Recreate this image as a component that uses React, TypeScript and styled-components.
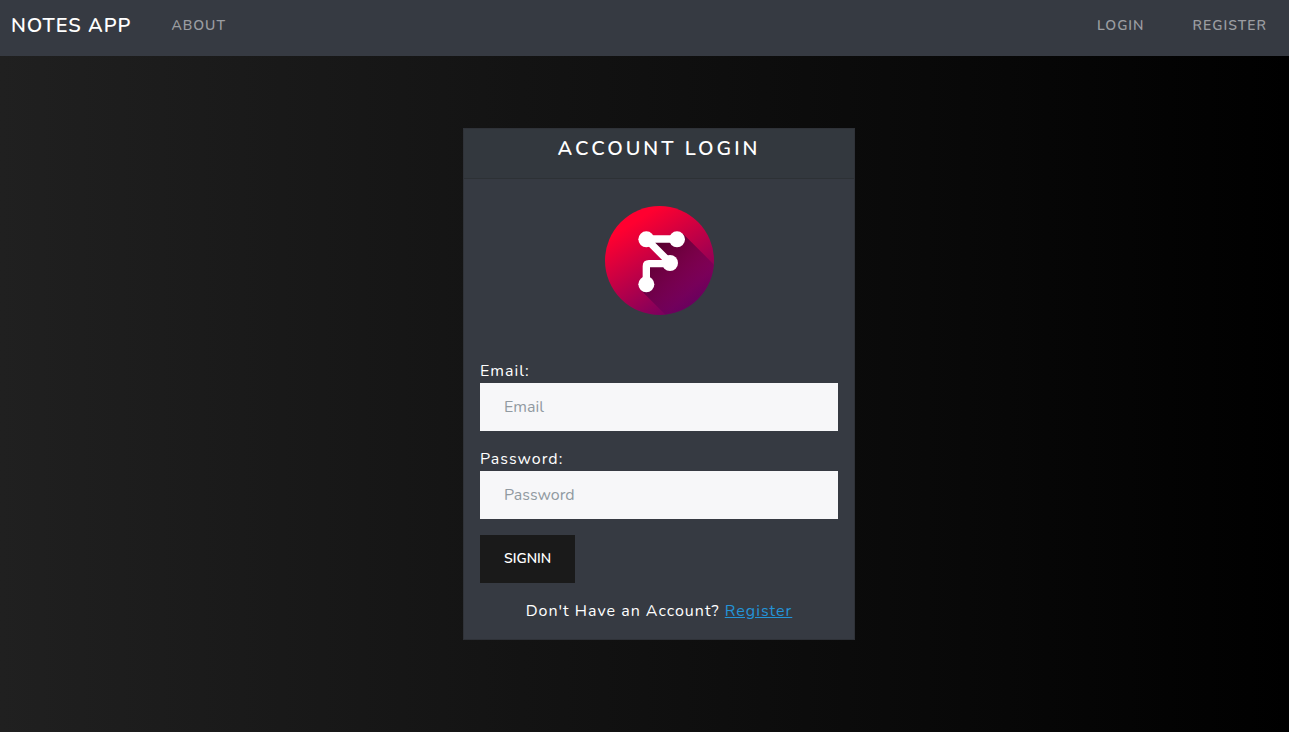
import React from 'react';
import styled, { createGlobalStyle } from 'styled-components';

const GlobalStyle = createGlobalStyle`
  *, *::before, *::after { box-sizing: border-box; }
  html { min-height: 100%; background: linear-gradient(to right, #202020, #000000); }
  body {
    margin: 0;
    color: #fff;
    font-family: Nunito, "Nunito Sans", Lato, sans-serif;
    font-size: 16px;
    line-height: 24px;
    letter-spacing: 1px;
  }
`;

const Navbar = styled.nav`
  display: flex;
  align-items: flex-start;
  height: 56px;
  padding: 11px 22px 0 11px;
  background: #363a42;
`;

const Brand = styled.a`
  margin-right: 40px;
  color: #fff;
  font-size: 20px;
  line-height: 30px;
  font-weight: 600;
  text-decoration: none;
`;

const NavLinks = styled.div`
  display: flex;
  gap: 48px;
  &:last-child { margin-left: auto; }
`;

const NavLink = styled.a`
  color: #9b9da1;
  font-size: 14px;
  line-height: 30px;
  font-weight: 600;
  text-decoration: none;
`;

const Main = styled.main`
  display: flex;
  justify-content: center;
  padding: 72px 0 72px 29px;
`;

const Card = styled.section`
  width: 392px;
  max-width: 100%;
  border: 1px solid #2f3238;
  background: #363a42;
`;

const CardTitle = styled.h1`
  margin: 0;
  padding: 5px 16px 14px;
  border-bottom: 1px solid #2d3135;
  background: #33383e;
  font-size: 20px;
  line-height: 30px;
  font-weight: 600;
  letter-spacing: 3px;
  text-align: center;
`;

const CardBody = styled.div`
  padding: 27px 16px 16px;
`;

const Logo = styled.svg`
  display: block;
  width: 109px;
  height: 109px;
  margin: 0 auto 44px;
`;

const Field = styled.div`
  margin-bottom: 16px;
`;

const Label = styled.label`
  display: block;
`;

const Input = styled.input`
  display: block;
  width: 100%;
  height: 48px;
  padding: 0 24px;
  border: 0;
  border-radius: 0;
  background: #f7f7f9;
  color: #1a1a1a;
  font: inherit;
  letter-spacing: normal;
  &::placeholder { color: #919aa1; opacity: 1; }
`;

const SubmitButton = styled.button`
  height: 48px;
  padding: 0 24px 2px;
  border: 0;
  background: #1a1a1a;
  color: #fff;
  font-family: inherit;
  font-size: 14px;
  font-weight: 600;
  cursor: pointer;
`;

const Prompt = styled.p`
  margin: 16px 0 0;
  text-align: center;
`;

const PromptLink = styled.a`
  color: #2494d8;
`;

function BrandLogo() {
  return (
    <Logo viewBox="0 0 327 327" role="img" aria-label="Notes App logo">
      <defs>
        <linearGradient id="disc" x1="0.28" y1="0.14" x2="0.8" y2="0.96">
          <stop offset="0" stopColor="#ff0030" />
          <stop offset="1" stopColor="#6a0064" />
        </linearGradient>
        <linearGradient id="shade" gradientUnits="userSpaceOnUse" x1="140" y1="140" x2="255" y2="255">
          <stop offset="0" stopColor="#3b002c" stopOpacity="0.8" />
          <stop offset="1" stopColor="#5c0058" stopOpacity="0.35" />
        </linearGradient>
        <clipPath id="discClip">
          <circle cx="163.5" cy="163.5" r="163.5" />
        </clipPath>
      </defs>
      <circle cx="163.5" cy="163.5" r="163.5" fill="url(#disc)" />
      <path
        clipPath="url(#discClip)"
        fill="url(#shade)"
        d="M234 83 L400 249 L273 418 L107 252 L124 235 L124 173 L195 171 L124 100 L217 100 Z"
      />
      <path
        d="M217 99 H124 L195 170 M195 173 H132 Q124 173 124 181 V235"
        fill="none"
        stroke="#fff"
        strokeWidth="22"
        strokeLinejoin="round"
      />
      <g fill="#fff">
        <circle cx="124" cy="100" r="24" />
        <circle cx="216" cy="100" r="24" />
        <circle cx="195" cy="171" r="24" />
        <circle cx="124" cy="235" r="24" />
      </g>
    </Logo>
  );
}

export default function App() {
  return (
    <>
      <GlobalStyle />
      <Navbar>
        <Brand href="#">NOTES APP</Brand>
        <NavLinks>
          <NavLink href="#about">ABOUT</NavLink>
        </NavLinks>
        <NavLinks>
          <NavLink href="#login">LOGIN</NavLink>
          <NavLink href="#register">REGISTER</NavLink>
        </NavLinks>
      </Navbar>
      <Main>
        <Card>
          <CardTitle>ACCOUNT LOGIN</CardTitle>
          <CardBody>
            <BrandLogo />
            <form onSubmit={(event) => event.preventDefault()}>
              <Field>
                <Label htmlFor="email">Email:</Label>
                <Input id="email" type="email" placeholder="Email" />
              </Field>
              <Field>
                <Label htmlFor="password">Password:</Label>
                <Input id="password" type="password" placeholder="Password" />
              </Field>
              <SubmitButton type="submit">SIGNIN</SubmitButton>
            </form>
            <Prompt>
              Don't Have an Account? <PromptLink href="#register">Register</PromptLink>
            </Prompt>
          </CardBody>
        </Card>
      </Main>
    </>
  );
}
